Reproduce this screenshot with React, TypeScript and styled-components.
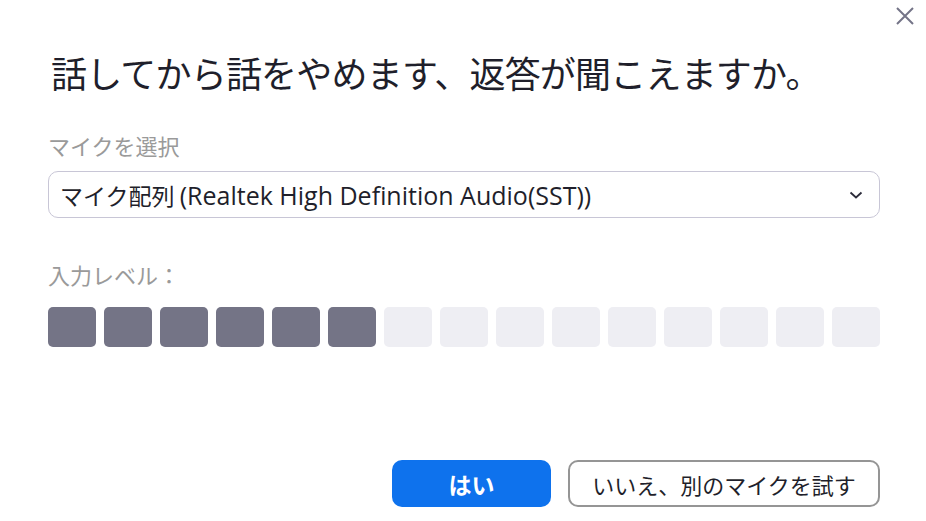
import * as React from 'react'
import styled, { createGlobalStyle } from 'styled-components'

const GlobalStyle = createGlobalStyle`
  html, body {
    margin: 0;
    padding: 0;
    background: #ffffff;
  }
  body {
    font-family: 'Noto Sans CJK JP', 'Noto Sans', sans-serif;
  }
`

const FONT = `'Noto Sans CJK JP', 'Noto Sans', sans-serif`

const LEVEL_TOTAL = 15
const LEVEL_ACTIVE = 6

const CloseIcon: React.FC = () => (
  <svg width="20" height="20" viewBox="0 0 20 20">
    <path d="M2 2 L18 18 M18 2 L2 18" stroke="#747487" strokeWidth="2" fill="none" />
  </svg>
)

const ChevronIcon: React.FC = () => (
  <svg width="14" height="8" viewBox="0 0 14 8">
    <path d="M1.5 1.5 L7 6.5 L12.5 1.5" stroke="#2b2b3a" strokeWidth="1.8" fill="none" />
  </svg>
)

export default function App() {
  return (
    <>
      <GlobalStyle />
      <Dialog>
        <CloseButton aria-label="閉じる">
          <CloseIcon />
        </CloseButton>
        <Title>話してから話をやめます、返答が聞こえますか。</Title>

        <FieldLabel>マイクを選択</FieldLabel>
        <SelectBox>
          <SelectText>
            マイク配列 <DeviceName>(Realtek High Definition Audio(SST))</DeviceName>
          </SelectText>
          <ChevronIcon />
        </SelectBox>

        <FieldLabel spaced>入力レベル：</FieldLabel>
        <Meter>
          {Array.from({ length: LEVEL_TOTAL }).map((_, i) => (
            <MeterCell key={i} active={i < LEVEL_ACTIVE} />
          ))}
        </Meter>

        <Footer>
          <PrimaryButton>はい</PrimaryButton>
          <SecondaryButton>いいえ、別のマイクを試す</SecondaryButton>
        </Footer>
      </Dialog>
    </>
  )
}

const Dialog = styled.div`
  position: relative;
  box-sizing: border-box;
  width: 926px;
  height: 521px;
  padding: 49px 46px 14px 48px;
  display: flex;
  flex-direction: column;
  background: #ffffff;
  font-family: ${FONT};
`

const CloseButton = styled.button`
  position: absolute;
  top: 6px;
  right: 11px;
  padding: 0;
  border: none;
  background: transparent;
  display: flex;
  cursor: pointer;
`

const Title = styled.h1`
  margin: 0 0 0 3px;
  font-size: 36px;
  line-height: 46px;
  font-weight: 400;
  letter-spacing: -0.8px;
  color: #1f1f2b;
  white-space: nowrap;
`

const FieldLabel = styled.div<{ spaced?: boolean }>`
  margin-top: ${p => (p.spaced ? '42px' : '36px')};
  font-size: 22px;
  line-height: 28px;
  color: #9a9a9a;
`

const SelectBox = styled.div`
  box-sizing: border-box;
  margin-top: 12px;
  height: 47px;
  padding: 0 16px 0 11px;
  display: flex;
  align-items: center;
  justify-content: space-between;
  border: 1.5px solid #c8c6d6;
  border-radius: 10px;
`

const SelectText = styled.span`
  font-size: 23px;
  line-height: 30px;
  color: #1f1f2b;
  white-space: pre;
`

const DeviceName = styled.span`
  font-family: 'Open Sans', 'Noto Sans CJK JP', sans-serif;
  font-size: 25px;
`

const Meter = styled.div`
  margin-top: 19px;
  display: grid;
  grid-template-columns: repeat(${LEVEL_TOTAL}, 48px);
  gap: 8px;
`

const MeterCell = styled.div<{ active: boolean }>`
  height: 40px;
  border-radius: 5px;
  background: ${p => (p.active ? '#747486' : '#eeeef3')};
`

const Footer = styled.div`
  margin-top: auto;
  display: flex;
  justify-content: flex-end;
  gap: 17px;
`

const ButtonBase = styled.button`
  box-sizing: border-box;
  height: 47px;
  border-radius: 10px;
  font-family: ${FONT};
  font-size: 22px;
  cursor: pointer;
`

const PrimaryButton = styled(ButtonBase)`
  width: 159px;
  border: none;
  background: #0e72ed;
  color: #ffffff;
  font-size: 23px;
  font-weight: 700;
`

const SecondaryButton = styled(ButtonBase)`
  width: 312px;
  border: 2px solid #959595;
  background: #ffffff;
  color: #1f1f2b;
`
